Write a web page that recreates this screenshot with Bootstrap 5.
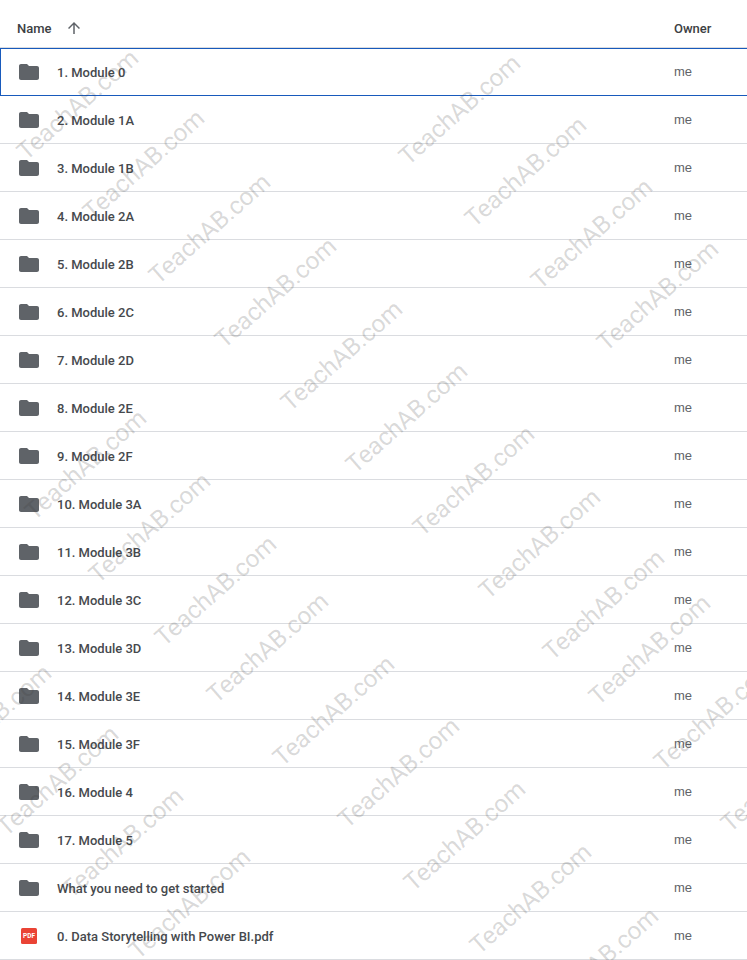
<!DOCTYPE html>
<html lang="en">
<head>
    <meta charset="UTF-8">
    <meta name="viewport" content="width=device-width, initial-scale=1.0">
    <title>Drive folder</title>
    <link rel="stylesheet" href="https://cdn.jsdelivr.net/npm/bootstrap@5.3.0/dist/css/bootstrap.min.css">
    <style>
        body {
            font-family: Roboto, "Liberation Sans", sans-serif;
            background: #fff;
            overflow: hidden;
        }
        .drive-wrap {
            width: 747px;
            height: 960px;
            overflow: hidden;
        }
        .drive-head {
            height: 48px;
            padding-top: 9px;
            font-size: 13px;
            font-weight: 500;
            color: #3c4043;
            border-bottom: 1px solid #dadce0;
        }
        .drive-head span { padding-top: 2px; }
        .head-name { width: 674px; padding-left: 17px; }
        .head-arrow { margin-left: 13px; }
        .list-group-flush > .drive-row,
        .list-group-flush > .drive-row:last-child {
            height: 48px;
            padding: 1px 0 0;
            border: 0;
            border-bottom: 1px solid #dadce0;
            border-radius: 0;
            background: transparent;
        }
        .list-group-flush > .drive-row.is-picked {
            padding-top: 0;
            border: 1px solid #185abc;
            border-right: 0;
        }
        .row-icon {
            width: 57px;
            padding-left: 17px;
            flex-shrink: 0;
        }
        .row-name {
            width: 617px;
            padding-top: 2px;
            font-size: 13px;
            font-weight: 500;
            color: #46494d;
        }
        .row-owner {
            font-family: "Liberation Sans", sans-serif;
            font-size: 13px;
            color: #5f6368;
        }
        .drive-row.is-picked .row-icon { padding-left: 16px; width: 56px; }
        .wm-layer {
            inset: 0;
            pointer-events: none;
        }
        .wm-text {
            position: absolute;
            font-family: Roboto, sans-serif;
            font-size: 24.5px;
            line-height: 1;
            color: rgba(60, 60, 60, 0.2);
            white-space: nowrap;
            transform: translate(-50%, -50%) rotate(-41.5deg);
        }
    </style>
</head>
<body>
    <div class="drive-wrap position-relative">
        <div class="drive-head d-flex align-items-center">
            <div class="head-name d-flex align-items-center">
                <span>Name</span>
                <svg class="head-arrow" width="18" height="18" viewBox="0 0 24 24" fill="#5f6368"><path d="M20 12l-1.41-1.41L13 16.17V4h-2v12.17l-5.58-5.59L4 12l8 8 8-8z" transform="rotate(180 12 12)"/></svg>
            </div>
            <span>Owner</span>
        </div>
        <div class="list-group list-group-flush" id="driveRows"></div>
        <div class="wm-layer position-absolute" id="wmLayer"></div>
    </div>

    <script src="https://cdn.jsdelivr.net/npm/bootstrap@5.3.0/dist/js/bootstrap.bundle.min.js"></script>
    <script>
        const folderIcon = `<svg width="24" height="24" viewBox="0 0 24 24" fill="#5f6368"><path d="M10 4H4c-1.1 0-2 .9-2 2v12c0 1.1.9 2 2 2h16c1.1 0 2-.9 2-2V8c0-1.1-.9-2-2-2h-8l-2-2z"/></svg>`;
        const pdfIcon = `<svg width="24" height="24" viewBox="0 0 24 24"><rect x="4" y="4" width="16" height="16" rx="1.5" fill="#ea4335"/><text x="12" y="14.4" text-anchor="middle" font-family="Roboto, sans-serif" font-size="6.5" font-weight="700" fill="#fff">PDF</text></svg>`;

        const names = ['1. Module 0', '2. Module 1A', '3. Module 1B', '4. Module 2A', '5. Module 2B', '6. Module 2C',
            '7. Module 2D', '8. Module 2E', '9. Module 2F', '10. Module 3A', '11. Module 3B', '12. Module 3C',
            '13. Module 3D', '14. Module 3E', '15. Module 3F', '16. Module 4', '17. Module 5',
            'What you need to get started', '0. Data Storytelling with Power BI.pdf'];

        const rows = document.getElementById('driveRows');
        names.forEach((name, i) => {
            const row = document.createElement('div');
            row.className = 'list-group-item drive-row d-flex align-items-center' + (i === 0 ? ' is-picked' : '');
            row.innerHTML = `
                <div class="row-icon d-flex">${name.endsWith('.pdf') ? pdfIcon : folderIcon}</div>
                <div class="row-name">${name}</div>
                <div class="row-owner">me</div>`;
            rows.appendChild(row);
        });

        // watermark centres read off the screenshot
        const marks = [[78,105],[144,165],[210,229],[276,293],[342,356],[407,418],[474,481],[540,544],[604,605],
            [460,110],[526,172],[592,234],[658,296],
            [86,465],[150,528],[216,591],[268,648],[334,711],[399,773],[465,836],[531,899],[598,963],
            [650,650],[715,715],[782,777],
            [-9,720],[58,781],[123,843],[190,904],[268,1012]];
        const layer = document.getElementById('wmLayer');
        marks.forEach(([x, y]) => {
            const el = document.createElement('span');
            el.className = 'wm-text';
            el.textContent = 'TeachAB.com';
            el.style.left = x + 'px';
            el.style.top = y + 'px';
            layer.appendChild(el);
        });
    </script>
</body>
</html>
